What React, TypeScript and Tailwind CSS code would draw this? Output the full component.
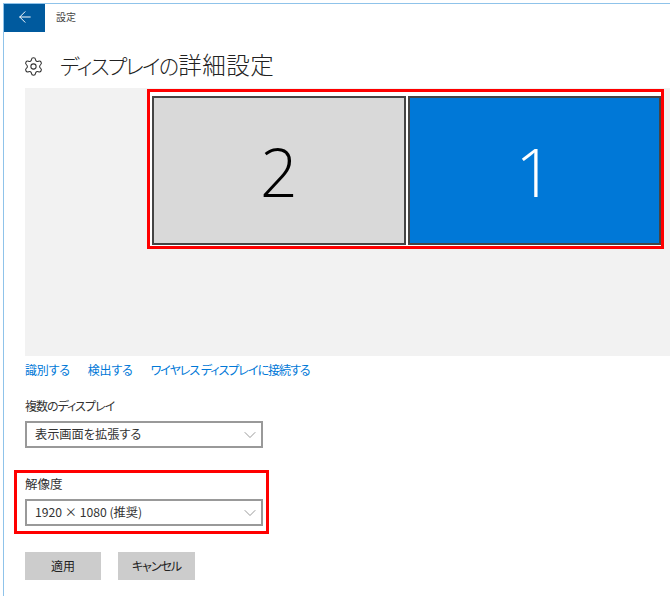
import { Settings, ArrowLeft, ChevronDown } from "lucide-react";

const font = "[font-family:'Noto_Sans_CJK_JP','Noto_Sans',sans-serif] [font-feature-settings:'palt']";

function Dropdown({ label }: { label: string }) {
  return (
    <div className="flex h-[27px] w-[238px] items-center justify-between border-2 border-[#999999] bg-white pl-[8px] pr-[1px]">
      <span className="text-[12.2px] leading-none text-[#333333]">{label}</span>
      <ChevronDown className="h-[20px] w-[20px] text-[#777777]" strokeWidth={0.9} />
    </div>
  );
}

function Monitor({ n, active }: { n: string; active?: boolean }) {
  return (
    <div
      className={`flex h-[149px] w-[254px] items-center justify-center border-2 border-[#444444] ${
        active ? "bg-[#0078d7] text-white" : "bg-[#d9d9d9] text-black"
      }`}
    >
      <span className="[font-family:'Open_Sans',sans-serif] text-[66px] font-light leading-none">{n}</span>
    </div>
  );
}

export default function App() {
  return (
    <div className={`h-[596px] w-[670px] overflow-hidden bg-white pl-[3px] pt-[3px] ${font}`}>
      <div className="h-full border-l border-t border-[#8fc3ea]">
        <div className="flex h-[28px] items-center">
          <div className="flex h-full w-[41px] items-center justify-center bg-[#005a9e] pb-[2px]">
            <ArrowLeft className="h-[18px] w-[18px] text-white" strokeWidth={1.3} />
          </div>
          <span className="ml-[11px] pb-[3px] text-[10px] text-[#444444]">設定</span>
        </div>

        <div className="ml-[19px] mt-[20px] flex h-[28px] items-center">
          <Settings className="h-[21px] w-[21px] text-[#333333]" strokeWidth={1.2} />
          <h1 className="ml-[16px] flex items-baseline whitespace-nowrap pb-[2px] font-light leading-none text-[#222222]">
            <span className="text-[21px] tracking-[-1.8px]">ディスプレイの</span>
            <span className="ml-[1px] text-[23.5px] tracking-[0.5px]">詳細設定</span>
          </h1>
        </div>

        <div className="relative ml-[21px] mt-[8px] h-[268px] bg-[#f2f2f2]">
          <div className="absolute left-[122px] top-[1px] flex h-[160px] w-[517px] items-end gap-[2px] border-[3px] border-[#ff0000] bg-white pb-[1px] pl-[2px]">
            <Monitor n="2" />
            <Monitor n="1" active />
          </div>
        </div>

        <div className="ml-[21px] mt-[5px] flex h-[18px] items-center gap-[18px] text-[12px] leading-none text-[#0078d7]">
          <span className="tracking-[-0.2px]">識別する</span>
          <span className="tracking-[-0.2px]">検出する</span>
          <span className="whitespace-nowrap tracking-[-1px]">ワイヤレス ディスプレイに接続する</span>
        </div>

        <p className="ml-[21px] mt-[18px] text-[12px] leading-[18px] tracking-[-1px] text-[#333333]">複数のディスプレイ</p>
        <div className="ml-[21px] mt-[6px]">
          <Dropdown label="表示画面を拡張する" />
        </div>

        <div className="ml-[10px] mt-[22px] flex h-[64px] w-[255px] flex-col border-[3px] border-[#ff0000] pl-[8px] pt-[2px]">
          <p className="text-[12.5px] leading-[18px] text-[#333333]">解像度</p>
          <div className="mt-[6px]">
            <Dropdown label="1920 × 1080 (推奨)" />
          </div>
        </div>

        <div className="ml-[21px] mt-[18px] flex gap-[17px]">
          <button className="h-[28px] w-[76px] bg-[#cccccc] text-[12px] text-[#222222]">適用</button>
          <button className="h-[28px] w-[77px] bg-[#cccccc] text-[12px] tracking-[-1px] text-[#222222]">キャンセル</button>
        </div>
      </div>
    </div>
  );
}
